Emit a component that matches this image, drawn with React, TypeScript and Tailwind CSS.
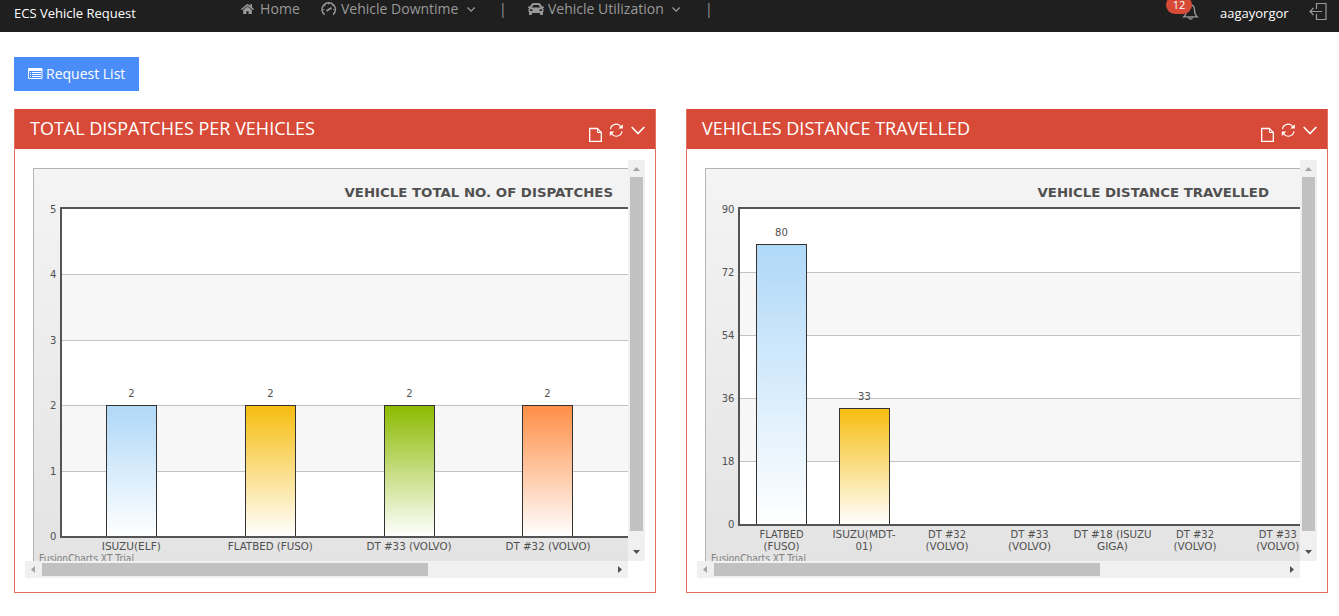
import type { ReactNode } from "react";
import { FaCar, FaHome } from "react-icons/fa";

type Label = { x: number; lines: { text: string; width: number }[] };
type Bar = { x: number; top: number; value: string; color: string };
type ChartData = {
  id: string;
  origin: number;
  title: string;
  titleX: number;
  titleWidth: number;
  axis: number;
  base: number;
  ticks: { y: number; text: string }[];
  bars: Bar[];
  labels: Label[];
};

const dispatches: ChartData = {
  id: "dispatches",
  origin: 25,
  title: "VEHICLE TOTAL NO. OF DISPATCHES",
  titleX: 344.5,
  titleWidth: 268.5,
  axis: 60,
  base: 536,
  ticks: [
    { y: 208, text: "5" },
    { y: 274, text: "4" },
    { y: 340, text: "3" },
    { y: 405, text: "2" },
    { y: 471, text: "1" },
    { y: 536, text: "0" },
  ],
  bars: [
    { x: 106, top: 405, value: "2", color: "#AFD8F8" },
    { x: 245, top: 405, value: "2", color: "#F6BD0F" },
    { x: 384, top: 405, value: "2", color: "#8BBA00" },
    { x: 522, top: 405, value: "2", color: "#FF8E46" },
  ],
  labels: [
    { x: 131.3, lines: [{ text: "ISUZU(ELF)", width: 59 }] },
    { x: 270.3, lines: [{ text: "FLATBED (FUSO)", width: 85 }] },
    { x: 409, lines: [{ text: "DT #33 (VOLVO)", width: 85 }] },
    { x: 548, lines: [{ text: "DT #32 (VOLVO)", width: 85 }] },
  ],
};

const distance: ChartData = {
  id: "distance",
  origin: 697,
  title: "VEHICLE DISTANCE TRAVELLED",
  titleX: 1037.5,
  titleWidth: 231.5,
  axis: 738,
  base: 524,
  ticks: [
    { y: 208, text: "90" },
    { y: 272, text: "72" },
    { y: 335, text: "54" },
    { y: 398, text: "36" },
    { y: 461, text: "18" },
    { y: 524, text: "0" },
  ],
  bars: [
    { x: 756, top: 244, value: "80", color: "#AFD8F8" },
    { x: 839, top: 408, value: "33", color: "#F6BD0F" },
  ],
  labels: [
    { x: 781.5, lines: [{ text: "FLATBED", width: 44 }, { text: "(FUSO)", width: 36 }] },
    { x: 864, lines: [{ text: "ISUZU(MDT-", width: 63 }, { text: "01)", width: 17 }] },
    { x: 947, lines: [{ text: "DT #32", width: 38 }, { text: "(VOLVO)", width: 43 }] },
    { x: 1029.5, lines: [{ text: "DT #33", width: 38 }, { text: "(VOLVO)", width: 43 }] },
    { x: 1112.5, lines: [{ text: "DT #18 (ISUZU", width: 78 }, { text: "GIGA)", width: 31 }] },
    { x: 1195, lines: [{ text: "DT #32", width: 38 }, { text: "(VOLVO)", width: 43 }] },
    { x: 1277.8, lines: [{ text: "DT #33", width: 38 }, { text: "(VOLVO)", width: 43 }] },
  ],
};

function Chart({ data }: { data: ChartData }) {
  const { id, origin, axis, base, ticks } = data;
  const right = origin + 603;
  return (
    <svg
      width="603"
      height="401"
      viewBox={`${origin} 160 603 401`}
      className="block font-['Verdana','DejaVu_Sans',sans-serif] text-[9.6px]"
    >
      <defs>
        <linearGradient id={`${id}-bg`} x1="0" y1="0" x2="0" y2="1">
          <stop offset="0" stopColor="#f4f4f4" />
          <stop offset="1" stopColor="#e3e3e3" />
        </linearGradient>
        {data.bars.map((bar) => (
          <linearGradient key={bar.x} id={`${id}-${bar.x}`} x1="0" y1="0" x2="0" y2="1">
            <stop offset="0" stopColor={bar.color} />
            <stop offset="1" stopColor="#ffffff" />
          </linearGradient>
        ))}
      </defs>
      <rect x={origin + 8.5} y="168.5" width="800" height="400" fill={`url(#${id}-bg)`} stroke="#b4b4b4" />
      <g shapeRendering="crispEdges">
        <rect x={axis} y="208" width={right - axis} height={base - 208} fill="#ffffff" />
        {[1, 3].map((i) => (
          <rect key={i} x={axis} y={ticks[i].y} width={right - axis} height={ticks[i + 1].y - ticks[i].y} fill="#f7f7f7" />
        ))}
        {ticks.slice(1, 5).map((t) => (
          <rect key={t.y} x={axis} y={t.y} width={right - axis} height="1" fill="#c2c2c2" />
        ))}
        {data.bars.map((bar) => (
          <rect
            key={bar.x}
            x={bar.x + 0.5}
            y={bar.top + 0.5}
            width="50"
            height={base - bar.top}
            fill={`url(#${id}-${bar.x})`}
            stroke="#333333"
          />
        ))}
        <path d={`M${right} 208H${axis + 1}V${base + 1}H${right}`} fill="none" stroke="#545454" strokeWidth="2" />
      </g>
      <g fill="#505050" lengthAdjust="spacingAndGlyphs">
        <text
          x={data.titleX}
          y="197"
          textLength={data.titleWidth}
          lengthAdjust="spacingAndGlyphs"
          className="text-[12.5px] font-bold"
        >
          {data.title}
        </text>
        {ticks.map((t) => (
          <text
            key={t.y}
            x={axis - 3.5 - t.text.length * 6.4}
            y={t.y === 208 ? 213 : t.y + 4}
            textLength={t.text.length * 6.4}
            lengthAdjust="spacingAndGlyphs"
          >
            {t.text}
          </text>
        ))}
        {data.bars.map((bar) => (
          <text
            key={bar.x}
            x={bar.x + 25.5 - bar.value.length * 3.2}
            y={bar.top - 8}
            textLength={bar.value.length * 6.4}
            lengthAdjust="spacingAndGlyphs"
          >
            {bar.value}
          </text>
        ))}
        {data.labels.map((label) =>
          label.lines.map((line, i) => (
            <text
              key={`${label.x}-${i}`}
              x={label.x - line.width / 2}
              y={base + 14 + i * 12}
              textLength={line.width}
              lengthAdjust="spacingAndGlyphs"
            >
              {line.text}
            </text>
          )),
        )}
      </g>
      <text x={origin + 14} y="562" textLength="95" lengthAdjust="spacingAndGlyphs" fill="#808080">
        FusionCharts XT Trial
      </text>
    </svg>
  );
}

function Panel({ title, children }: { title: string; children: ReactNode }) {
  return (
    <section className="h-[484px] w-[642px] shrink-0 border border-t-0 border-[#e3705f]">
      <header className="flex h-10 justify-between bg-[#d84a38] pr-[10px] pl-[15px] text-white">
        <h2 className="text-[18px] leading-[38px]">{title}</h2>
        <svg width="57" height="40" viewBox="588 109 57 40" fill="none" stroke="#fff">
          <path d="M589.7 128.500h7.600l4 4v8.800h-11.600z" strokeWidth="1.3" />
          <path d="M597.500 128.500v4h4" />
          <path d="M610.500 129.200a5.700 5.700 0 0 1 10.400-2.400M622 131.200a5.700 5.700 0 0 1-10.300 2.600" strokeWidth="1.2" />
          <path d="M622.800 124.300v4.300h-4.400zM609.800 136v-4.600h4.500z" fill="#fff" stroke="none" />
          <path d="M631.700 127l6.300 6.500 6.300-6.500" strokeWidth="1.6" />
        </svg>
      </header>
      <div className="grid grid-cols-[603px_17px] grid-rows-[401px_17px] pt-[11px] pl-[10px]">
        {children}
        <div className="flex flex-col items-center bg-[#f0f0f0]">
          <svg width="17" height="17" viewBox="0 0 17 17">
            <path d="M5 11h7L8.500 7z" fill="#a3a3a3" />
          </svg>
          <div className="h-[354px] w-[13px] bg-[#c1c1c1]" />
          <svg width="17" height="17" viewBox="0 0 17 17" className="mt-[13px]">
            <path d="M5 6h7L8.500 10z" fill="#505050" />
          </svg>
        </div>
        <div className="flex items-center bg-[#f0f0f0]">
          <svg width="17" height="17" viewBox="0 0 17 17">
            <path d="M10 5v7L6 8.500z" fill="#a3a3a3" />
          </svg>
          <div className="h-[13px] w-[386px] bg-[#c1c1c1]" />
          <svg width="17" height="17" viewBox="0 0 17 17" className="ml-auto">
            <path d="M7 5v7l4-3.500z" fill="#505050" />
          </svg>
        </div>
      </div>
    </section>
  );
}

function Chevron() {
  return (
    <svg width="10" height="18" viewBox="0 0 10 18" fill="none" stroke="#999" strokeWidth="1.3">
      <path d="M0.500 7.500l3.600 3.600 3.600-3.600" />
    </svg>
  );
}

export default function App() {
  return (
    <div className="h-[616px] w-[1339px] overflow-hidden bg-white font-['Open_Sans',sans-serif]">
      <nav className="flex h-8 bg-[#1f1f1f] text-[14px] leading-[18px] text-[#999]">
        <div className="w-[241px] shrink-0 pt-[4px] pl-[14px] text-[13px] text-white">ECS Vehicle Request</div>
        <div className="flex w-[80px] shrink-0">
          <FaHome className="mt-[2px] mr-[6px] h-[14px] w-[13px]" />
          <span className="tracking-[0.1px]">Home</span>
        </div>
        <div className="flex w-[178px] shrink-0">
          <svg width="16" height="18" viewBox="0 0 16 18" fill="none" stroke="#999" strokeWidth="1.5" className="mr-[4px]">
            <path d="M3.500 14.700A6.700 6.700 0 1 1 12 14.700" />
            <path d="M5.500 11l5-3.200" strokeWidth="1.8" />
            <path d="M7.700 3v1.500M3.500 5.200l1 1M12 5.200l-1 1M2 9.500h1.300M13.300 9.500H12" strokeWidth="1" />
          </svg>
          <span className="w-[126px]">Vehicle Downtime</span>
          <Chevron />
        </div>
        <span className="w-[29px] shrink-0">|</span>
        <div className="flex w-[177px] shrink-0">
          <FaCar className="mt-[1px] mr-[4px] h-[16px] w-[16px]" />
          <span className="w-[124px]">Vehicle Utilization</span>
          <Chevron />
        </div>
        <span className="w-[462px] shrink-0">|</span>
        <div className="relative w-[53px] shrink-0">
          <svg width="20" height="24" viewBox="0 0 20 24" fill="none" stroke="#999" strokeWidth="1.3" className="absolute top-0 left-[14px]">
            <path d="M2.800 16.800c2.200-2 2.700-3.500 2.700-6.800 0-3 1.500-5 4-5s4 2 4 5c0 3.300.5 4.800 2.700 6.800zM7.700 17.300c.3 2.400 3.300 2.400 3.600 0" />
          </svg>
          <span className="absolute top-[-4px] left-[-1px] h-[18px] w-[26px] rounded-full bg-[#d84a38] text-center text-[11px] text-white">12</span>
        </div>
        <span className="w-[88px] shrink-0 pt-[4px] text-[13px] text-white">aagayorgor</span>
        <svg width="20" height="24" viewBox="1308 0 20 24" fill="none" stroke="#999" strokeWidth="1.2">
          <path d="M1316.500 9V3.500h9.500v16h-9.500V14M1322 11.500h-12M1313.500 8l-3.500 3.500 3.500 3.500" />
        </svg>
      </nav>
      <main className="px-[14px] pt-[25px]">
        <button className="flex h-[34px] w-[125px] items-center bg-[#4b8df8] pb-[2px] pl-[14px] text-[14px] text-white">
          <svg width="15" height="12" viewBox="0 0 15 12" fill="#fff" className="mt-[2px] mr-[3px]">
            <path fillRule="evenodd" d="M1 0h12.500a1 1 0 0 1 1 1v9a1 1 0 0 1-1 1H1a1 1 0 0 1-1-1V1a1 1 0 0 1 1-1zM1 3v7h12.500V3z" />
            <path d="M2 4h1v1H2zM4 4h9v1H4zM2 6h1v1H2zM4 6h9v1H4zM2 8h1v1H2zM4 8h9v1H4z" />
          </svg>
          Request List
        </button>
        <div className="mt-[18px] flex gap-[30px]">
          <Panel title="TOTAL DISPATCHES PER VEHICLES">
            <Chart data={dispatches} />
          </Panel>
          <Panel title="VEHICLES DISTANCE TRAVELLED">
            <Chart data={distance} />
          </Panel>
        </div>
      </main>
    </div>
  );
}
